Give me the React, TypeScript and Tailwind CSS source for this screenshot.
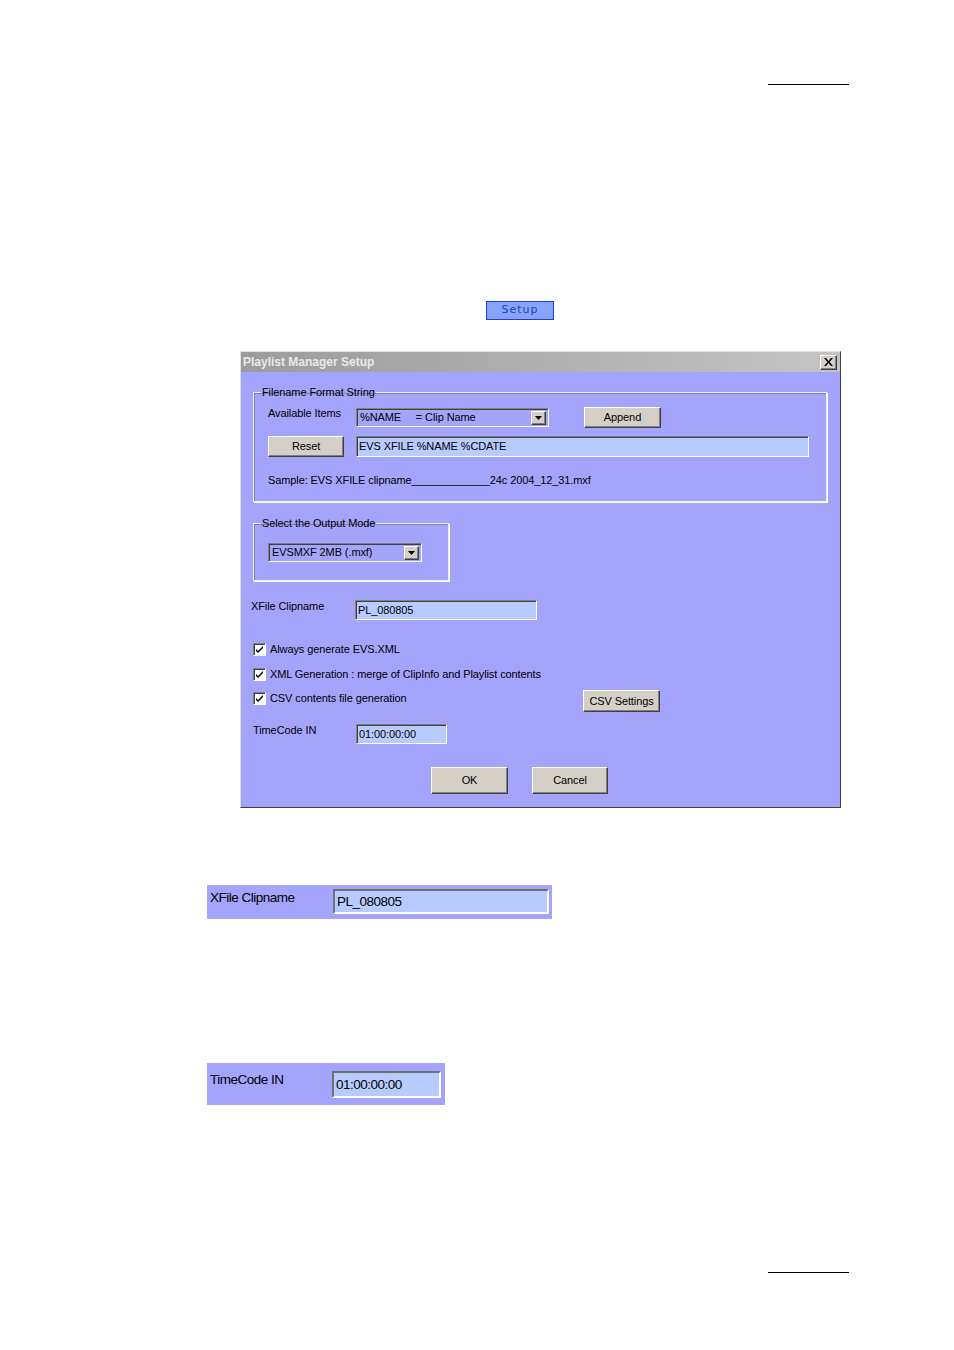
import type { ReactNode } from 'react';

const raised =
    'bg-[#d4d0c8] border border-t-white border-l-white border-r-[#404040] border-b-[#404040] shadow-[inset_-1px_-1px_0_#808080]';
const sunken =
    'border border-t-[#808080] border-l-[#808080] border-r-white border-b-white shadow-[inset_1px_1px_0_#404040]';

function WinButton({ label, w, h }: { label: string; w: string; h: string }) {
    return (
        <div className={`${raised} ${w} ${h} flex items-center justify-center text-[11px] leading-none`}>
            {label}
        </div>
    );
}

function Field({ value, w, h }: { value: string; w: string; h: string }) {
    return (
        <div className={`${sunken} ${w} ${h} bg-[#b8cbff] flex items-center pl-[2px] text-[11px] leading-none`}>
            {value}
        </div>
    );
}

function Combo({ value, w }: { value: ReactNode; w: string }) {
    return (
        <div className={`${sunken} ${w} h-[19px] flex items-center justify-between pl-[3px] pr-[2px] text-[11px] leading-none`}>
            <span className="whitespace-pre">{value}</span>
            <div className={`${raised} w-[15px] h-[14px] flex items-center justify-center`}>
                <svg width="7" height="4" viewBox="0 0 7 4">
                    <path d="M0 0h7L3.5 4z" fill="#000" />
                </svg>
            </div>
        </div>
    );
}

function Check({ label }: { label: string }) {
    return (
        <div className="flex items-center gap-[4px]">
            <div className={`${sunken} w-[13px] h-[13px] bg-white flex items-center justify-center`}>
                <svg width="9" height="9" viewBox="0 0 9 9">
                    <path d="M1 4l2 2 5-5v2L3 8 1 6z" fill="#000" />
                </svg>
            </div>
            <span className="text-[11px] leading-[13px]">{label}</span>
        </div>
    );
}

function Group({ title, className, children }: { title: string; className: string; children: ReactNode }) {
    return (
        <fieldset className={`border border-[#f0f0f8] shadow-[inset_1px_1px_0_#8080a0,1px_1px_0_#ffffff] pl-[14px] ${className}`}>
            <legend className="-ml-[7px] px-[1px] text-[11px] leading-[13px]">{title}</legend>
            {children}
        </fieldset>
    );
}

export default function App() {
    return (
        <div className="w-[954px] h-[1350px] bg-white flex flex-col font-['Liberation_Sans',Arial,sans-serif] text-black">
            {/* header rule */}
            <div className="ml-[768px] mt-[84px] w-[81px] h-px bg-black" />

            {/* Setup button */}
            <div className="ml-[486px] mt-[216px] w-[68px] h-[19px] bg-[#86a4ff] border border-[#1c44c4] flex items-center justify-center text-[11px] tracking-[1px] text-[#2448a8] font-['DejaVu_Sans',sans-serif]">
                Setup
            </div>

            {/* Dialog */}
            <div className="ml-[240px] mt-[31px] w-[601px] h-[457px] flex flex-col tracking-[-0.1px] border border-t-[#e0e0e0] border-l-[#e0e0e0] border-r-[#404040] border-b-[#404040] shadow-[inset_-1px_-1px_0_#808080]">
                <div className="h-[20px] shrink-0 bg-gradient-to-r from-[#9c9c9c] to-[#c4c4c4] flex items-center justify-between pl-[2px] pr-[3px]">
                    <span className="text-[12px] font-bold tracking-normal text-[#e8e8e8]">Playlist Manager Setup</span>
                    <div className={`${raised} w-[17px] h-[15px] flex items-center justify-center`}>
                        <svg width="9" height="8" viewBox="0 0 9 8">
                            <path d="M0 0h2l2.5 3L7 0h2L5.5 4 9 8H7L4.5 5 2 8H0l3.5-4z" fill="#000" />
                        </svg>
                    </div>
                </div>

                <div className="flex-1 bg-[#a4a4fc] px-[12px] pt-[14px] flex flex-col">
                    <Group title="Filename Format String" className="w-[574px] h-[116px]">
                        <div className="mt-[8px] flex items-start">
                            <span className="w-[88px] text-[11px] leading-[13px]">Available Items</span>
                            <div className="mt-[1px]">
                                <Combo w="w-[193px]" value={'%NAME     = Clip Name'} />
                            </div>
                            <div className="ml-[35px]">
                                <WinButton label="Append" w="w-[77px]" h="h-[21px]" />
                            </div>
                        </div>
                        <div className="mt-[8px] flex items-start">
                            <WinButton label="Reset" w="w-[76px]" h="h-[21px]" />
                            <div className="ml-[12px]">
                                <Field value="EVS XFILE %NAME %CDATE" w="w-[453px]" h="h-[21px]" />
                            </div>
                        </div>
                        <div className="mt-[17px] text-[11px] leading-[13px]">
                            Sample: EVS XFILE clipname_____________24c 2004_12_31.mxf
                        </div>
                    </Group>

                    <Group title="Select the Output Mode" className="mt-[15px] w-[196px] h-[64px]">
                        <div className="mt-[13px]">
                            <Combo w="w-[154px]" value="EVSMXF 2MB (.mxf)" />
                        </div>
                    </Group>

                    <div className="mt-[19px] h-[20px] flex items-start">
                        <span className="-ml-[2px] w-[104px] text-[11px] leading-[13px]">XFile Clipname</span>
                        <Field value="PL_080805" w="w-[182px]" h="h-[20px]" />
                    </div>

                    <div className="mt-[23px] h-[14px]">
                        <Check label="Always generate EVS.XML" />
                    </div>
                    <div className="mt-[11px] h-[14px]">
                        <Check label="XML Generation : merge of ClipInfo and Playlist contents" />
                    </div>
                    <div className="mt-[8px] h-[22px] flex items-start">
                        <div className="mt-[2px] w-[330px]">
                            <Check label="CSV contents file generation" />
                        </div>
                        <WinButton label="CSV Settings" w="w-[77px]" h="h-[22px]" />
                    </div>

                    <div className="mt-[12px] h-[20px] flex items-start">
                        <span className="w-[103px] text-[11px] leading-[13px]">TimeCode IN</span>
                        <Field value="01:00:00:00" w="w-[91px]" h="h-[20px]" />
                    </div>

                    <div className="mt-[23px] flex gap-[24px] pl-[178px]">
                        <WinButton label="OK" w="w-[77px]" h="h-[27px]" />
                        <WinButton label="Cancel" w="w-[76px]" h="h-[27px]" />
                    </div>
                </div>
            </div>

            {/* Enlarged: XFile Clipname */}
            <div className="ml-[207px] mt-[77px] w-[345px] h-[34px] bg-[#a4a4fc] flex items-start pl-[3px] tracking-[-0.5px]">
                <span className="mt-[4px] w-[123px] text-[13.5px] leading-[17px]">XFile Clipname</span>
                <div className="mt-[4px] w-[216px] h-[25px] bg-[#b8cbff] border-2 border-t-[#707070] border-l-[#707070] border-r-white border-b-white flex items-center pl-[2px] text-[13.5px] leading-none">
                    PL_080805
                </div>
            </div>

            {/* Enlarged: TimeCode IN */}
            <div className="ml-[207px] mt-[144px] w-[238px] h-[42px] bg-[#a4a4fc] flex items-start pl-[3px] tracking-[-0.5px]">
                <span className="mt-[8px] w-[122px] text-[13.5px] leading-[17px]">TimeCode IN</span>
                <div className="mt-[8px] w-[109px] h-[27px] bg-[#b8cbff] border-2 border-t-[#707070] border-l-[#707070] border-r-white border-b-white flex items-center pl-[2px] text-[13.5px] leading-none">
                    01:00:00:00
                </div>
            </div>

            {/* footer rule */}
            <div className="ml-[768px] mt-[167px] w-[81px] h-px bg-black" />
        </div>
    );
}
